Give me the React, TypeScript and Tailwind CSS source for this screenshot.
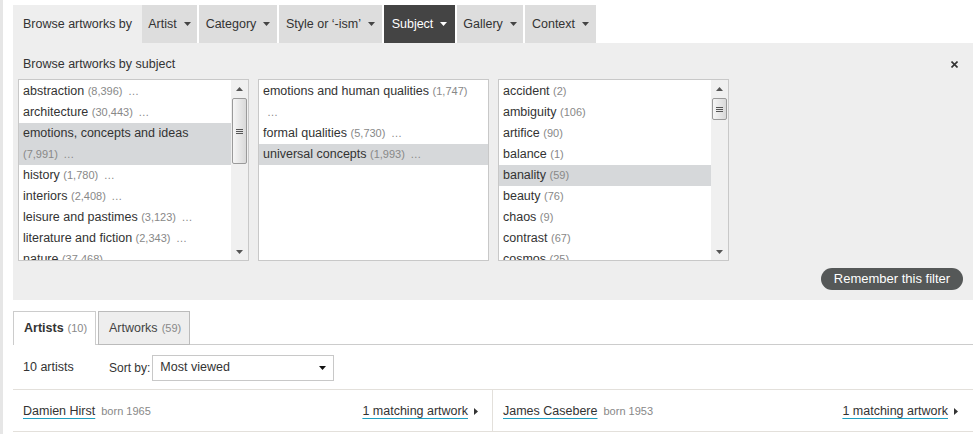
import React from "react";

type Item = { name: string; count: string; more?: boolean; selected?: boolean; wrap?: boolean };

const Caret = ({ color = "#555" }: { color?: string }) => (
  <svg width="7" height="4" viewBox="0 0 7 4" className="shrink-0">
    <path d="M0 0 L7 0 L3.5 4 Z" fill={color} />
  </svg>
);

const RightTri = () => (
  <svg width="4" height="7" viewBox="0 0 4 7" className="shrink-0">
    <path d="M0 0 L4 3.5 L0 7 Z" fill="#333" />
  </svg>
);

const Scrollbar = ({ thumbH }: { thumbH: number }) => (
  <div className="w-[17px] h-full flex flex-col bg-[#f0f0f0] shrink-0">
    <div className="h-[17px] flex items-center justify-center">
      <svg width="7" height="4" viewBox="0 0 7 4">
        <path d="M0 4 L7 4 L3.5 0 Z" fill="#555" />
      </svg>
    </div>
    <div className="flex-1 px-[1px] pt-[1px]">
      <div
        className="rounded-[2px] border border-[#9a9a9a] bg-gradient-to-r from-[#f6f6f6] to-[#d9d9d9] flex flex-col items-center justify-center gap-[1px]"
        style={{ height: thumbH }}
      >
        <div className="w-[7px] h-[1px] bg-[#555]" />
        <div className="w-[7px] h-[1px] bg-[#555]" />
        <div className="w-[7px] h-[1px] bg-[#555]" />
      </div>
    </div>
    <div className="h-[17px] flex items-center justify-center">
      <Caret color="#555" />
    </div>
  </div>
);

const ListBox = ({ items, thumbH }: { items: Item[]; thumbH?: number }) => (
  <div className="w-[231px] h-[182px] border border-[#c8c8c8] bg-white flex overflow-hidden">
    <div className="flex-1 overflow-hidden pt-[1px]">
      {items.map((it, i) => (
        <div
          key={i}
          className={`px-[4px] leading-[21px] text-[12.5px] text-[#333] ${it.selected ? "bg-[#d6d8da]" : ""}`}
        >
          {it.name}
          {it.wrap ? <br /> : " "}
          <span className="text-[11px] text-[#888]">({it.count})</span>
          {it.more && (
            <>
              {" "}
              <span className="text-[11px] text-[#888] ml-[2px]">…</span>
            </>
          )}
        </div>
      ))}
    </div>
    {thumbH !== undefined && <Scrollbar thumbH={thumbH} />}
  </div>
);

const list1: Item[] = [
  { name: "abstraction", count: "8,396", more: true },
  { name: "architecture", count: "30,443", more: true },
  { name: "emotions, concepts and ideas", count: "7,991", more: true, selected: true, wrap: true },
  { name: "history", count: "1,780", more: true },
  { name: "interiors", count: "2,408", more: true },
  { name: "leisure and pastimes", count: "3,123", more: true },
  { name: "literature and fiction", count: "2,343", more: true },
  { name: "nature", count: "37,468", more: true },
];

const list3: Item[] = [
  { name: "accident", count: "2" },
  { name: "ambiguity", count: "106" },
  { name: "artifice", count: "90" },
  { name: "balance", count: "1" },
  { name: "banality", count: "59", selected: true },
  { name: "beauty", count: "76" },
  { name: "chaos", count: "9" },
  { name: "contrast", count: "67" },
  { name: "cosmos", count: "25" },
];

const tabs = [
  { label: "Artist", w: "w-[55px]" },
  { label: "Category", w: "w-[78px]" },
  { label: "Style or ‘-ism’", w: "w-[103px]" },
  { label: "Subject", w: "w-[71px]", active: true },
  { label: "Gallery", w: "w-[66px]" },
  { label: "Context", w: "w-[71px]" },
];

const Link = ({ children }: { children: React.ReactNode }) => (
  <span className="text-[12.5px] text-[#333] underline decoration-[#1f9fbf] underline-offset-[3px]">
    {children}
  </span>
);

const ArtistRow = ({ name, born, last }: { name: string; born: string; last?: boolean }) => (
  <div
    className={`flex items-center justify-between h-full pl-[10px] pt-[2px] ${
      last ? "flex-1 pr-[15px]" : "w-[480px] pr-[14px] border-r border-[#e3e0db]"
    }`}
  >
    <div className="flex items-baseline">
      <Link>{name}</Link>
      <span className="ml-[6px] text-[11px] text-[#888]">born {born}</span>
    </div>
    <div className="flex items-center gap-[6px]">
      <Link>1 matching artwork</Link>
      <RightTri />
    </div>
  </div>
);

export default function App() {
  return (
    <div
      className="min-h-[434px] w-full bg-white border-l-[3px] border-[#e6e6e6] pl-[10px] pt-[5px]"
      style={{ fontFamily: '"Liberation Sans", Arial, sans-serif' }}
    >
      <div className="w-[960px]">
        {/* top nav */}
        <div className="flex h-[38px] text-[12.5px]">
          <div className="w-[129px] bg-[#eeeeee] flex items-center pl-[10px] text-[#333]">
            Browse artworks by
          </div>
          <div className="flex gap-[2px]">
            {tabs.map((t) => (
              <div
                key={t.label}
                className={`${t.w} flex items-center justify-center gap-[7px] ${
                  t.active ? "bg-[#444444] text-white" : "bg-[#dddddd] text-[#333]"
                }`}
              >
                <span>{t.label}</span>
                <Caret color={t.active ? "#ffffff" : "#444"} />
              </div>
            ))}
          </div>
        </div>

        {/* filter panel */}
        <div className="bg-[#eeeeee] h-[257px] px-[5px] pt-[13px] flex flex-col">
          <div className="flex items-center justify-between h-[16px] pl-[5px] pr-[10px]">
            <span className="text-[12.5px] text-[#333]">Browse artworks by subject</span>
            <svg width="7" height="7" viewBox="0 0 7 7">
              <path d="M0.5 0.5 L6.5 6.5 M6.5 0.5 L0.5 6.5" stroke="#333" strokeWidth="1.6" />
            </svg>
          </div>
          <div className="flex gap-[9px] mt-[7px]">
            <ListBox items={list1} thumbH={66} />
            <div className="w-[231px] h-[182px] border border-[#c8c8c8] bg-white overflow-hidden pt-[1px]">
              <div className="px-[4px] leading-[21px] text-[12.5px] text-[#333]">
                emotions and human qualities <span className="text-[11px] text-[#888]">(1,747)</span>
                <br />
                <span className="text-[11px] text-[#888] ml-[4px]">…</span>
              </div>
              <div className="px-[4px] leading-[21px] text-[12.5px] text-[#333]">
                formal qualities <span className="text-[11px] text-[#888]">(5,730)</span>{" "}
                <span className="text-[11px] text-[#888] ml-[2px]">…</span>
              </div>
              <div className="px-[4px] leading-[21px] text-[12.5px] text-[#333] bg-[#d6d8da]">
                universal concepts <span className="text-[11px] text-[#888]">(1,993)</span>{" "}
                <span className="text-[11px] text-[#888] ml-[2px]">…</span>
              </div>
            </div>
            <ListBox items={list3} thumbH={22} />
          </div>
          <div className="flex justify-end mt-[7px] pr-[5px]">
            <button className="w-[142px] h-[22px] rounded-full bg-[#555858] text-white text-[13px] leading-[22px]">
              Remember this filter
            </button>
          </div>
        </div>

        {/* result tabs */}
        <div className="mt-[11px] flex items-end h-[34px] border-b border-[#cccccc]">
          <div className="w-[83px] h-[34px] -mb-px bg-white border-l border-t border-r border-[#cccccc] flex items-center pl-[10px]">
            <span className="text-[12.5px] font-bold text-[#333]">Artists</span>
            <span className="ml-[4px] text-[11px] text-[#888]">(10)</span>
          </div>
          <div className="ml-[2px] w-[92px] h-[34px] -mb-px bg-[#eeeeee] border border-[#bbbbbb] flex items-center pl-[10px]">
            <span className="text-[12.5px] text-[#444]">Artworks</span>
            <span className="ml-[4px] text-[11px] text-[#888]">(59)</span>
          </div>
        </div>

        {/* controls */}
        <div className="h-[45px] flex items-center px-[10px] pt-[1px] border-b border-[#e3e0db]">
          <span className="w-[86px] text-[12.5px] text-[#333]">10 artists</span>
          <span className="text-[12px] text-[#333]">Sort by:</span>
          <div className="ml-[2px] w-[182px] h-[26px] border border-[#c8c8c8] bg-white flex items-center justify-between pl-[7px] pr-[7px]">
            <span className="text-[12.5px] text-[#333]">Most viewed</span>
            <Caret color="#111" />
          </div>
        </div>

        {/* artists */}
        <div className="h-[42px] flex border-b border-[#e3e0db]">
          <ArtistRow name="Damien Hirst" born="1965" />
          <ArtistRow name="James Casebere" born="1953" last />
        </div>
      </div>
    </div>
  );
}
